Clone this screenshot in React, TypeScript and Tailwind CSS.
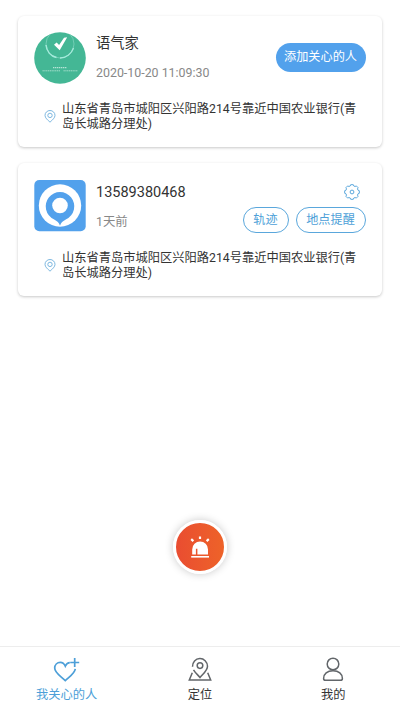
import React, { useState } from "react";
import clsx from "clsx";

const PinIcon = () => (
  <svg width="12" height="13" viewBox="0 0 12 13" fill="none" stroke="#6fb0dd" strokeWidth="0.9">
    <path d="M6 12.2C3.6 9.9 1 7.9 1 5.4a5 4.9 0 0 1 10 0c0 2.500-2.600 4.500-5 6.800Z" />
    <circle cx="6" cy="5.400" r="2.200" />
  </svg>
);

const GearIcon = () => (
  <svg width="16" height="16" viewBox="0 0 16 16" fill="none" stroke="#5aa7dc" strokeWidth="1" strokeLinejoin="round">
    <path d="M6.3 1.9 6.7.7h2.6l.4 1.2 1.4.6 1.2-.6 1.8 1.8-.6 1.2.6 1.4 1.2.4v2.6l-1.2.4-.6 1.4.6 1.2-1.8 1.8-1.2-.6-1.4.6-.4 1.2H6.7l-.4-1.2-1.4-.6-1.2.6-1.8-1.8.6-1.2-.6-1.4-1.2-.4V6.700l1.200-.4.6-1.400-.6-1.200 1.800-1.800 1.200.6Z" />
    <circle cx="8" cy="8" r="1.900" />
  </svg>
);

const CheckAvatar = () => (
  <svg width="52" height="52" viewBox="0 0 52 52" fill="none">
    <defs>
      <clipPath id="avatarClip">
        <circle cx="26" cy="26" r="25.8" />
      </clipPath>
    </defs>
    <g clipPath="url(#avatarClip)">
      <rect width="52" height="52" fill="#44b795" />
      <circle cx="26" cy="12" r="14" stroke="#7dd3bd" strokeWidth="0.8" />
      <path d="M12 13c.6 6 4.500 11 10.500 12.500" stroke="#a5eadb" strokeWidth="1.500" />
      <path d="M26 26c6 0 11.500-4 13.500-10" stroke="#a5eadb" strokeWidth="1.300" />
      <path d="m20 12.800 2.600-2.200 2.500 2.400 4.900-7.200 3.200-.6-7.500 13Z" fill="white" />
      <path d="M19 35.700h14" stroke="#b5e3d5" strokeWidth="1.200" strokeDasharray="1.400 0.600" />
      <path d="M8.500 38.800h17.500M29.500 38.800h14" stroke="#a5ddcc" strokeWidth="1" strokeDasharray="1.300 0.500" />
    </g>
  </svg>
);

const LocatorAvatar = () => (
  <svg width="52" height="52" viewBox="0 0 52 52">
    <rect x="0.300" y="0" width="51.400" height="51.200" rx="5" fill="#52a1ec" />
    <circle cx="26" cy="25.500" r="21.200" fill="white" />
    <path d="M26 45.800c-.8-3.200-2.700-4.700-6.200-6.600a14.300 14.300 0 1 1 12.400 0c-3.500 1.900-5.400 3.400-6.200 6.600Z" fill="#52a1ec" />
    <circle cx="26" cy="25.500" r="7.800" fill="white" />
  </svg>
);

const SirenIcon = () => (
  <svg className="mt-px" width="24" height="24" viewBox="0 0 24 24" fill="none">
    <path d="M4.200 18.600v-5.200a7.900 7.900 0 0 1 15.800 0v5.200H9.400v-5.800H7.900v5.800Z" fill="white" />
    <path d="M3.200 20.800h17.800" stroke="white" strokeWidth="1.600" />
    <path d="M12 .6v2.500M3.200 3.200l2.200 1.900M20.800 3.200l-2.200 1.900" stroke="white" strokeWidth="2.200" />
  </svg>
);

const HeartPlusIcon = () => (
  <svg width="28" height="26" viewBox="0 0 28 26" fill="none" stroke="#4d9fd8" strokeWidth="1.700">
    <path d="M16.800 5.700c-2.100 0-3.600 1.600-4.500 3.500C11.300 7 9.600 5.400 7.300 5.400c-3.200 0-5.600 2.500-5.600 5.700 0 4.800 5.100 7.400 10.600 12.500 4.800-4.400 9.400-7.200 10-11.700" />
    <path d="M21.700 1v8.900M17.200 5.500h9" />
  </svg>
);

const MapPinIcon = () => (
  <svg width="24" height="26" viewBox="0 0 24 26" fill="none" stroke="#62666a" strokeWidth="1.500">
    <path d="M4.500 9.700a7.500 7.900 0 1 1 15-.5c0 4.100-3.700 6.900-7.500 11.300-2.500-2.900-5-5.100-6.500-7.700" />
    <circle cx="12" cy="8.600" r="2.800" />
    <path d="M4.300 15.700 1.300 22.900h21.400l-3-7.200" />
  </svg>
);

const UserIcon = () => (
  <svg width="24" height="26" viewBox="0 0 24 26" fill="none" stroke="#62666a" strokeWidth="1.500">
    <circle cx="12" cy="7" r="5.800" />
    <path d="M4.500 23.300c-1.200 0-1.900-.7-1.900-1.900 0-4.500 3.700-7.700 9.400-7.700s9.400 3.200 9.400 7.700c0 1.200-.7 1.900-1.900 1.900Z" />
  </svg>
);

const Address = () => (
  <div className="flex items-center pl-[26px] gap-[6px]">
    <PinIcon />
    <p className="w-[300px] text-[12.250px] leading-[14.500px] text-[#333]">
      山东省青岛市城阳区兴阳路214号靠近中国农业银行(青
      <br />
      岛长城路分理处)
    </p>
  </div>
);

const tabs = [
  { id: "care", label: "我关心的人", icon: <HeartPlusIcon /> },
  { id: "location", label: "定位", icon: <MapPinIcon /> },
  { id: "mine", label: "我的", icon: <UserIcon /> },
];

const App = () => {
  const [activeTab, setActiveTab] = useState("care");

  return (
    <div className="flex flex-col w-full h-[710px] bg-white font-[Roboto,'Noto_Sans_CJK_SC',sans-serif]">
      <div className="flex flex-col flex-1 px-[18px] pt-4 gap-4">
        {/* Own position */}
        <div className="h-[131px] pt-4 rounded-md bg-white shadow-[0_1px_3px_rgba(0,0,0,0.22)]">
          <div className="flex pl-4 pr-[16.500px]">
            <CheckAvatar />
            <div className="flex flex-col flex-1 pt-px gap-[12px] pl-[10px]">
              <h2 className="text-[14.300px] leading-5 text-[#333]">语气家</h2>
              <p className="text-[12.400px] leading-4 text-[#888]">2020-10-20 11:09:30</p>
            </div>
            <button className="mt-[11px] w-[90px] h-[29px] rounded-full bg-[#52a1ec] text-[12.150px] text-white whitespace-nowrap">
              添加关心的人
            </button>
          </div>
          <div className="mt-[18px]">
            <Address />
          </div>
        </div>

        {/* Followed person */}
        <div className="h-[133px] pt-[17px] rounded-md bg-white shadow-[0_1px_3px_rgba(0,0,0,0.22)]">
          <div className="flex pl-4 pr-[16.500px]">
            <LocatorAvatar />
            <div className="flex flex-col flex-1 pt-[3px] gap-[11px] pl-[10px]">
              <h2 className="text-[14.500px] leading-5 text-[#333]">13589380468</h2>
              <p className="text-[12.400px] leading-4 text-[#888]">1天前</p>
            </div>
            <div className="flex flex-col items-end pt-[4px] gap-[7px]">
              <button className="mr-[6px]">
                <GearIcon />
              </button>
              <div className="flex gap-[7px] text-[12.150px] text-[#4d9fd8]">
                <button className="w-[46px] h-[26px] pt-px rounded-full border-[1.500px] border-[#5aa7dc]">轨迹</button>
                <button className="w-[70px] h-[26px] pt-px rounded-full border-[1.500px] border-[#5aa7dc]">地点提醒</button>
              </div>
            </div>
          </div>
          <div className="mt-[18px]">
            <Address />
          </div>
        </div>

        {/* Emergency button */}
        <button className="flex items-center justify-center self-center mt-auto mb-[72px] w-[54px] h-[54px] rounded-full border-[3px] border-white bg-linear-to-r from-[#e94b31] to-[#ee6428] bg-origin-border shadow-[0_0_8px_rgba(0,0,0,0.22)]">
          <SirenIcon />
        </button>
      </div>

      <nav className="flex h-16 border-t border-[#ededed]">
        {tabs.map((tab) => (
          <button
            key={tab.id}
            className={clsx(
              "flex flex-1 flex-col items-center pt-[10px] gap-[4px] text-[12.250px] leading-4",
              activeTab === tab.id ? "text-[#4d9fd8]" : "text-[#333]"
            )}
            onClick={() => setActiveTab(tab.id)}
          >
            {tab.icon}
            {tab.label}
          </button>
        ))}
      </nav>
    </div>
  );
};

export default App;
